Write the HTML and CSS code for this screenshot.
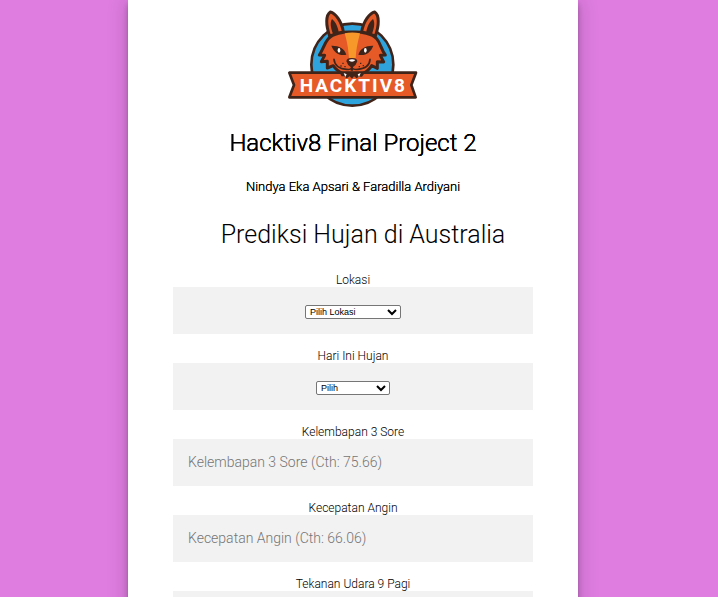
FILE: index.html
```html
<!DOCTYPE html>
<html lang="id">
<head>
<meta charset="utf-8">
<meta name="viewport" content="width=device-width, initial-scale=1">
<title>Prediksi Hujan di Australia</title>
<link rel="stylesheet" href="styles.css">
</head>
<body>
<main class="card">
  <header class="intro">
    <svg class="logo" viewBox="3 0 435 345" role="img" aria-label="Hacktiv8">
      <circle cx="217" cy="194" r="123" fill="#2fa4dc" stroke="#40241a" stroke-width="8"/>
      <g stroke="#40241a" stroke-width="9" stroke-linejoin="round">
        <path fill="#e65a28" d="M149 108C137 75 137 45 151 36C165 39 185 62 190 96Z"/>
        <path fill="#e65a28" d="M286 108C298 75 298 45 284 36C270 39 250 62 245 96Z"/>
        <path fill="#40241a" stroke="none" d="M160 104C151 82 150 66 156 57C167 65 174 82 177 99ZM275 104C284 82 285 66 279 57C268 65 261 82 258 99Z"/>
        <path fill="#e65a28" d="M217 96C190 94 158 101 145 116C132 132 130 147 118 165L134 166L124 185L142 184L142 204L160 197C169 212 182 218 194 224L204 231H231L242 223C255 218 267 211 275 197L292 205L292 185L311 186L301 166L316 165C303 148 303 132 290 116C277 101 244 94 217 96Z"/>
      </g>
      <path fill="#f6992a" d="M194 100Q217 95 240 100C235 120 229 143 227 174H207C205 143 200 120 194 100Z"/>
      <path fill="#40241a" d="M154 137C175 136 194 145 199 164C179 169 162 158 154 137ZM280 137C259 136 240 145 235 164C255 169 272 158 280 137Z"/>
      <ellipse cx="177" cy="151" rx="4" ry="7" fill="#fff"/>
      <ellipse cx="256" cy="151" rx="4" ry="7" fill="#fff"/>
      <path fill="#40241a" d="M199 184Q200 174 215 174Q231 174 232 184Q229 195 219 201V212H212V201Q202 195 199 184Z"/>
      <path fill="#fff" d="M206 180Q216 176 226 180Q222 185 216 185Q209 185 206 180Z"/>
      <path fill="none" stroke="#40241a" stroke-width="5" stroke-linecap="round" d="M162 178C164 198 182 207 200 208Q210 210 216 204Q222 210 233 208C252 206 269 197 270 178"/>
      <path fill="#40241a" d="M187 188h4v4h-4zM181 196h4v4h-4zM193 198h4v4h-4zM240 188h4v4h-4zM248 195h4v4h-4zM236 198h4v4h-4z"/>
      <path fill="#e65a28" stroke="#40241a" stroke-width="8" stroke-linejoin="round" d="M28 218H408L394 255L407 292H28L42 255Z"/>
      <path fill="#40241a" d="M181 222Q193 211 207 221Q216 215 226 221Q241 212 252 222L246 230H236L230 235L222 229L216 236L209 229L200 235L193 229H185Z"/>
      <path fill="#fff" d="M191 219l9 4l-4 8zM242 219l-9 4l4 8z"/>
      <text class="logo-text" x="220" y="276" text-anchor="middle">HACKTIV8</text>
    </svg>
    <h1 class="project">Hacktiv8 Final Project 2</h1>
    <p class="authors">Nindya Eka Apsari &amp; Faradilla Ardiyani</p>
    <h2 class="title">Prediksi Hujan di Australia</h2>
  </header>
  <form class="form">
    <div class="field">
      <label for="lokasi">Lokasi</label>
      <div class="box"><select id="lokasi" class="wide"><option>Pilih Lokasi</option></select></div>
    </div>
    <div class="field">
      <label for="hujan">Hari Ini Hujan</label>
      <div class="box"><select id="hujan"><option>Pilih</option></select></div>
    </div>
    <div class="field">
      <label for="kelembapan">Kelembapan 3 Sore</label>
      <input id="kelembapan" class="box" type="text" placeholder="Kelembapan 3 Sore (Cth: 75.66)">
    </div>
    <div class="field">
      <label for="angin">Kecepatan Angin</label>
      <input id="angin" class="box" type="text" placeholder="Kecepatan Angin (Cth: 66.06)">
    </div>
    <div class="field">
      <label for="tekanan">Tekanan Udara 9 Pagi</label>
      <input id="tekanan" class="box" type="text">
    </div>
  </form>
</main>
</body>
</html>
```
FILE: styles.css
```css
* {
  box-sizing: border-box;
}

html {
  scrollbar-width: none;
}

body {
  margin: 0;
  padding: 0 12px 0 0;
  background: #df7de1;
  color: #000;
  font-family: Roboto, sans-serif;
  font-weight: 300;
}

.card {
  max-width: 450px;
  min-height: 100vh;
  margin: 0 auto;
  padding: 0 45px 45px;
  background: #fff;
  box-shadow: 0 0 20px rgba(0, 0, 0, 0.2), 0 5px 5px rgba(0, 0, 0, 0.24);
  text-align: center;
}

.logo {
  display: block;
  width: 145px;
  height: 115px;
  margin: 0 auto;
}

.logo-text {
  fill: #fff;
  font-family: Roboto, sans-serif;
  font-size: 57px;
  font-weight: 700;
  letter-spacing: 6px;
}

.project,
.authors {
  font-weight: 300;
  text-shadow: 0 0 0 #000;
}

.project {
  margin: 12px 0 0;
  font-size: 24px;
  line-height: 32px;
  text-shadow: 0 0 0 #000, 0 0 0 #000;
}

.authors {
  margin: 20px 0 0;
  font-size: 13px;
  line-height: 16px;
}

.title {
  margin: 20px 0 0;
  padding-left: 20px;
  font-size: 25px;
  line-height: 40px;
  font-weight: 300;
  white-space: nowrap;
}

.form {
  display: flex;
  flex-direction: column;
  gap: 15px;
  margin-top: 18px;
}

.field {
  display: flex;
  flex-direction: column;
}

label {
  font-size: 12px;
  line-height: 14px;
}

.box {
  display: flex;
  align-items: center;
  justify-content: center;
  width: 100%;
  height: 47px;
  padding: 3px 15px 0;
  border: 0;
  background: #f2f2f2;
}

input.box {
  padding: 0 15px 2px;
  font-family: inherit;
  font-size: 14px;
  font-weight: 300;
}

input::placeholder {
  color: #757575;
}

select {
  width: 74px;
  height: 14px;
  padding: 0;
  border: 1px solid #767676;
  border-radius: 2px;
  background: #fff;
  color: #000;
  font-family: "Liberation Sans", Arial, sans-serif;
  font-size: 9px;
}

select.wide {
  width: 96px;
}
```
